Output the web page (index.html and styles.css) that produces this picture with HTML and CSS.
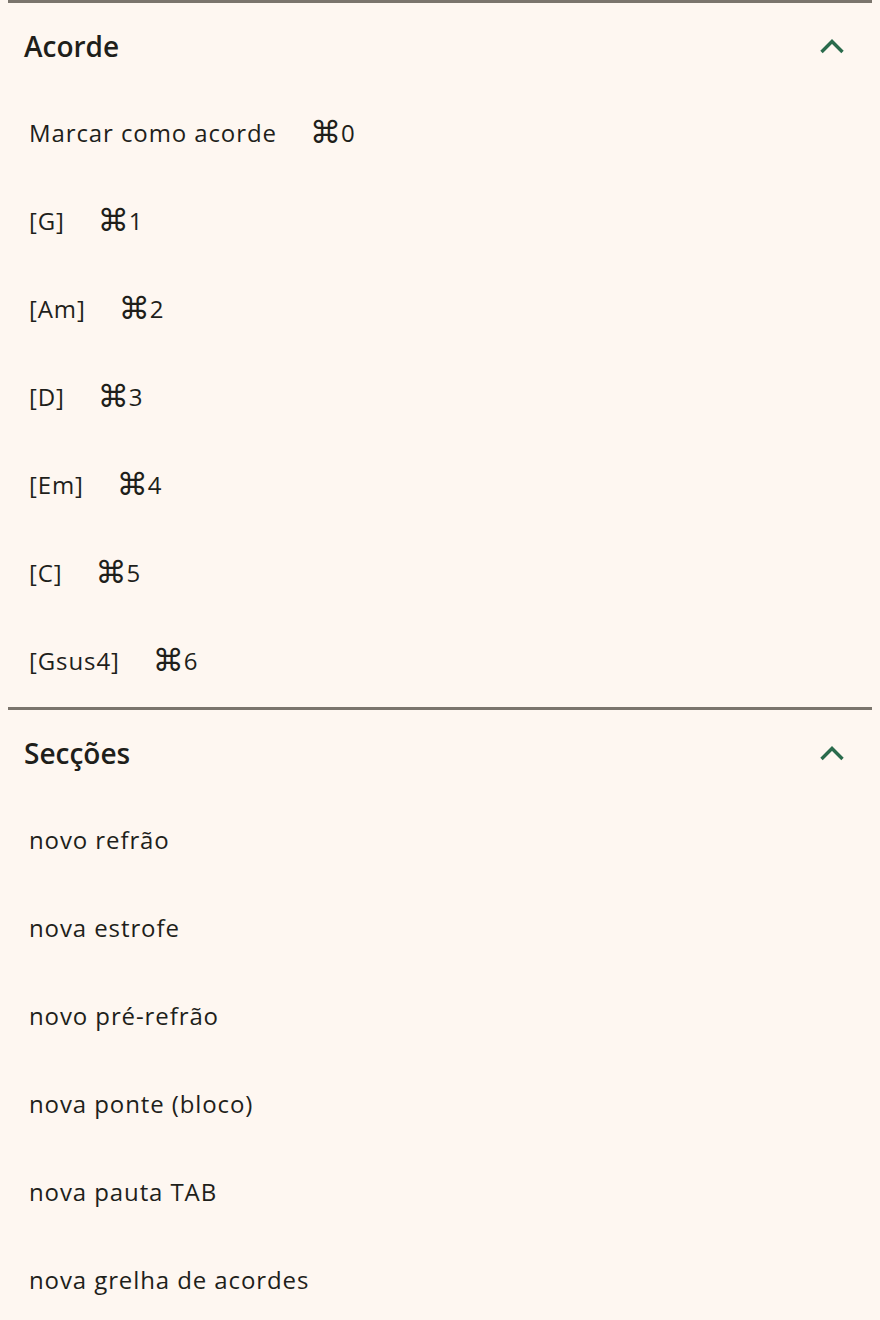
FILE: index.html
```html
<!DOCTYPE html>
<html lang="pt">
<head>
<meta charset="utf-8">
<link rel="stylesheet" href="styles.css">
</head>
<body>
<section class="group">
  <div class="group-head">
    <span class="group-title">Acorde</span>
    <svg class="chev" viewBox="0 0 26 18" width="26" height="18"><path d="M2.5 15 L13 4.5 L23.5 15" fill="none" stroke="#2a6b4c" stroke-width="3.4"/></svg>
  </div>
  <ul class="items">
    <li class="item"><span>Marcar como acorde</span><span class="kbd"><span class="cmd">⌘</span>0</span></li>
    <li class="item"><span>[G]</span><span class="kbd"><span class="cmd">⌘</span>1</span></li>
    <li class="item"><span>[Am]</span><span class="kbd"><span class="cmd">⌘</span>2</span></li>
    <li class="item"><span>[D]</span><span class="kbd"><span class="cmd">⌘</span>3</span></li>
    <li class="item"><span>[Em]</span><span class="kbd"><span class="cmd">⌘</span>4</span></li>
    <li class="item"><span>[C]</span><span class="kbd"><span class="cmd">⌘</span>5</span></li>
    <li class="item"><span>[Gsus4]</span><span class="kbd"><span class="cmd">⌘</span>6</span></li>
  </ul>
</section>
<section class="group">
  <div class="group-head">
    <span class="group-title">Secções</span>
    <svg class="chev" viewBox="0 0 26 18" width="26" height="18"><path d="M2.5 15 L13 4.5 L23.5 15" fill="none" stroke="#2a6b4c" stroke-width="3.4"/></svg>
  </div>
  <ul class="items">
    <li class="item"><span>novo refrão</span></li>
    <li class="item"><span>nova estrofe</span></li>
    <li class="item"><span>novo pré-refrão</span></li>
    <li class="item"><span>nova ponte (bloco)</span></li>
    <li class="item"><span>nova pauta TAB</span></li>
    <li class="item"><span>nova grelha de acordes</span></li>
  </ul>
</section>
</body>
</html>
```

FILE: styles.css
```css
html, body {
  background: #fef7f1;
}
body {
  margin: 0 8px;
  font-family: "Open Sans", "Noto Sans", sans-serif;
  color: #1f1f1b;
}
.group {
  border-top: 3px solid #7b756d;
}
.group-head {
  height: 88px;
  display: flex;
  align-items: center;
  justify-content: space-between;
  padding: 0 27px 0 16px;
}
.group-title {
  font-size: 28px;
  font-weight: 600;
  line-height: 1;
  margin-top: -3px;
}
.chev {
  display: block;
  margin-top: -3px;
}
.items {
  list-style: none;
  margin: 0;
  padding: 0;
}
.item {
  box-sizing: border-box;
  height: 88px;
  display: flex;
  align-items: center;
  gap: 33px;
  padding: 0 0 5px 21px;
  font-size: 24px;
  letter-spacing: 0.9px;
  line-height: 1;
}
.kbd {
  display: flex;
  align-items: center;
  letter-spacing: 0;
}
.cmd {
  font-family: "DejaVu Sans", sans-serif;
  font-size: 31px;
  line-height: 1;
}
```
